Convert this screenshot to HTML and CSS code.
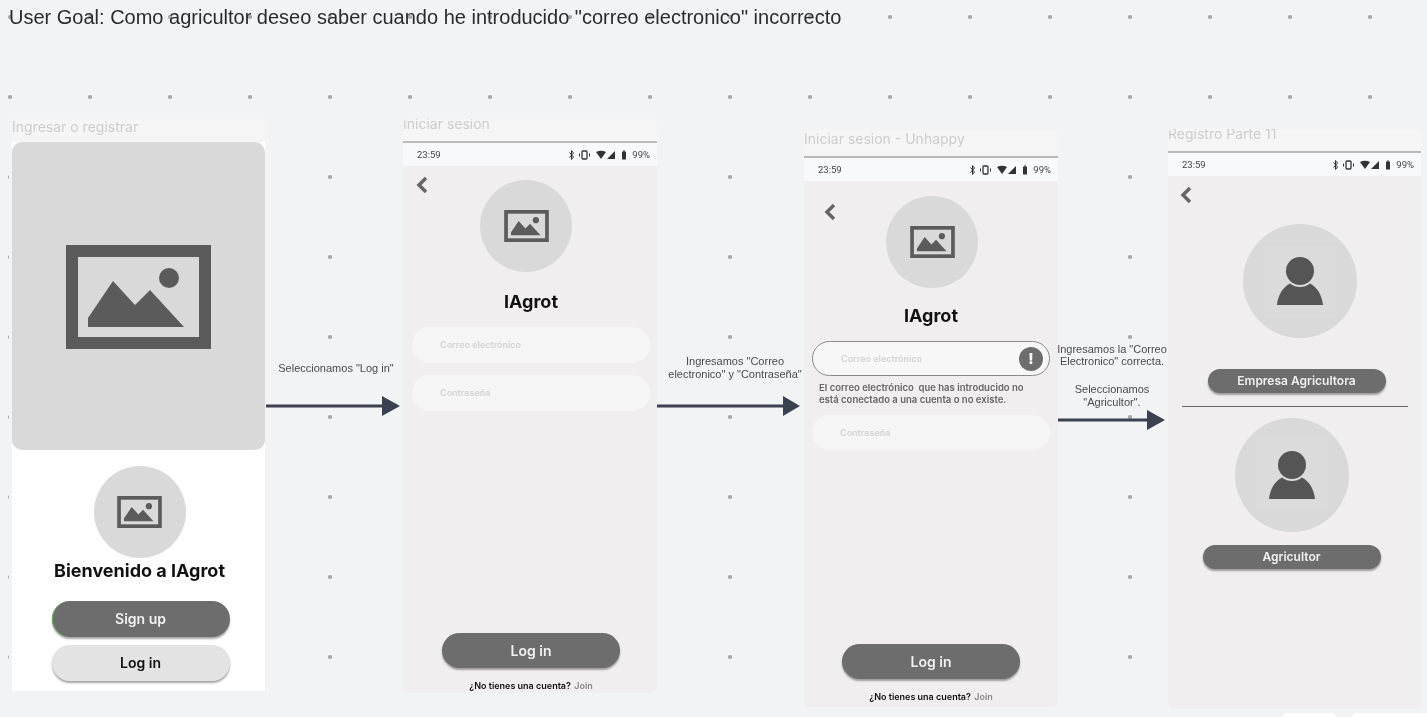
FILE: index.html
```html
<!DOCTYPE html>
<html lang="es">
<head>
    <meta charset="UTF-8">
    <title>User Goal</title>
    <link rel="stylesheet" href="styles.css">
</head>
<body>
    <svg class="defs" width="0" height="0">
        <symbol id="img-icon" viewBox="0 0 145 104">
            <rect x="6" y="6" width="133" height="92" fill="none" stroke="#5b5b5b" stroke-width="12"/>
            <circle cx="103" cy="33" r="10" fill="#5b5b5b"/>
            <path d="M22 82V73L47 36L69 60L84 45L118 82Z" fill="#5b5b5b"/>
        </symbol>
        <symbol id="person-icon" viewBox="0 0 46 48">
            <circle cx="23" cy="14" r="14" fill="#555"/>
            <path d="M0 48C1 38 6 30 13 26.500A16 16 0 0 0 33 26.500C40 30 45 38 46 48Z" fill="#555"/>
        </symbol>
        <symbol id="status-icons" viewBox="0 0 58 10">
            <path d="M0.500 2.500L4.500 7L2.500 9.500V0.500L4.500 3L0.500 7.500" fill="none" stroke="#333" stroke-width="1"/>
            <rect x="13" y="1" width="5" height="8" rx="1" fill="none" stroke="#333" stroke-width="1.300"/>
            <path d="M10.500 3.500V6.500M20.500 3.500V6.500" stroke="#333" stroke-width="1"/>
            <path d="M27 2Q32 -0.500 37 2L32 9Z" fill="#333"/>
            <path d="M46 1V9H38Z" fill="#333"/>
            <rect x="53" y="1.500" width="4" height="8" rx="0.500" fill="#333"/>
            <rect x="54" y="0.500" width="2" height="1" fill="#333"/>
        </symbol>
        <symbol id="chevron" viewBox="0 0 12 18">
            <path d="M10 2L3 9L10 16" fill="none" stroke="#666" stroke-width="3.500"/>
        </symbol>
    </svg>

    <div class="canvas">
        <h1 class="goal">User Goal: Como agricultor deseo saber cuando he introducido "correo electronico" incorrecto</h1>

        <!-- pantalla 1 -->
        <section class="frame frame-welcome">
            <div class="frame-title">Ingresar o registrar</div>
            <div class="welcome">
                <div class="hero">
                    <svg class="hero-icon"><use href="#img-icon"/></svg>
                </div>
                <div class="logo logo-welcome"><svg class="logo-icon"><use href="#img-icon"/></svg></div>
                <h2 class="app-name app-name-welcome">Bienvenido a IAgrot</h2>
                <div class="btn btn-signup">Sign up</div>
                <div class="btn btn-light">Log in</div>
            </div>
        </section>

        <!-- pantalla 2 -->
        <section class="frame frame-login">
            <div class="frame-title">Iniciar sesion</div>
            <div class="status">
                <span>23:59</span>
                <span class="status-right"><svg class="status-icons"><use href="#status-icons"/></svg>99%</span>
            </div>
            <div class="screen">
                <svg class="back"><use href="#chevron"/></svg>
                <div class="logo"><svg class="logo-icon"><use href="#img-icon"/></svg></div>
                <h2 class="app-name">IAgrot</h2>
                <div class="field field-first">Correo electrónico</div>
                <div class="field field-second">Contraseña</div>
                <div class="btn btn-main">Log in</div>
                <p class="join">¿No tienes una cuenta? <span>Join</span></p>
            </div>
        </section>

        <!-- pantalla 3 -->
        <section class="frame frame-unhappy">
            <div class="frame-title">Iniciar sesion - Unhappy</div>
            <div class="status">
                <span>23:59</span>
                <span class="status-right"><svg class="status-icons"><use href="#status-icons"/></svg>99%</span>
            </div>
            <div class="screen">
                <svg class="back"><use href="#chevron"/></svg>
                <div class="logo"><svg class="logo-icon"><use href="#img-icon"/></svg></div>
                <h2 class="app-name">IAgrot</h2>
                <div class="field field-first field-error">Correo electrónico<span class="alert">!</span></div>
                <p class="error-text">El correo electrónico&nbsp; que has introducido no<br>está conectado a una cuenta o no existe.</p>
                <div class="field field-second">Contraseña</div>
                <div class="btn btn-main">Log in</div>
                <p class="join">¿No tienes una cuenta? <span>Join</span></p>
            </div>
        </section>

        <!-- pantalla 4 -->
        <section class="frame frame-role">
            <div class="frame-title">Registro Parte 11</div>
            <div class="status">
                <span>23:59</span>
                <span class="status-right"><svg class="status-icons"><use href="#status-icons"/></svg>99%</span>
            </div>
            <div class="screen">
                <svg class="back"><use href="#chevron"/></svg>
                <div class="avatar avatar-one"><span class="avatar-box"><svg class="person"><use href="#person-icon"/></svg></span></div>
                <div class="btn btn-role btn-role-one">Empresa Agricultora</div>
                <div class="divider"></div>
                <div class="avatar avatar-two"><span class="avatar-box"><svg class="person"><use href="#person-icon"/></svg></span></div>
                <div class="btn btn-role btn-role-two">Agricultor</div>
            </div>
        </section>

        <p class="note note-1">Seleccionamos "Log in"</p>
        <p class="note note-2">Ingresamos "Correo<br>electronico" y "Contraseña"</p>
        <p class="note note-3">Ingresamos la "Correo<br>Electronico" correcta.</p>
        <p class="note note-4">Seleccionamos<br>"Agricultor".</p>

        <svg class="arrow arrow-1" viewBox="0 0 134 20"><path d="M0 8.500H116V11.500H0Z M116 0L134 10L116 20Z" fill="#3a4150"/></svg>
        <svg class="arrow arrow-2" viewBox="0 0 143 20"><path d="M0 8.500H126V11.500H0Z M126 0L143 10L126 20Z" fill="#3a4150"/></svg>
        <svg class="arrow arrow-3" viewBox="0 0 107 20"><path d="M0 8.500H89V11.500H0Z M89 0L107 10L89 20Z" fill="#3a4150"/></svg>

        <div class="chip chip-1"></div>
        <div class="chip chip-2"></div>
    </div>
</body>
</html>
```

FILE: styles.css
```css
* {
    box-sizing: border-box;
    margin: 0;
    padding: 0;
}

html, body {
    width: 1427px;
    height: 717px;
    overflow: hidden;
}

body {
    font-family: 'Inter', 'Liberation Sans', sans-serif;
    background: #f2f3f5;
}

.defs {
    position: absolute;
}

/* pizarra con puntos cada 80px */
.canvas {
    position: relative;
    width: 1427px;
    height: 717px;
    background-color: #f2f3f5;
    background-image: radial-gradient(circle at 40px 40px, #a9abb0 0, #a9abb0 1.7px, transparent 2.4px);
    background-size: 80px 80px;
    background-position: -30px -23px;
    filter: blur(0.35px);
}

.goal {
    position: absolute;
    left: 9px;
    top: 5px;
    font-family: 'Liberation Sans', Arial, sans-serif;
    font-size: 20px;
    line-height: 25px;
    font-weight: 400;
    color: #2a2b2d;
    white-space: nowrap;
}

.frame {
    position: absolute;
    display: flex;
    flex-direction: column;
    border-radius: 6px;
    overflow: hidden;
}

.frame-welcome { left: 9px; top: 118px; width: 256px; height: 573px; border-radius: 0; border-left: 3px solid #f2f3f5; }
.frame-login { left: 403px; top: 119px; width: 254px; height: 574px; }
.frame-unhappy { left: 804px; top: 130px; width: 254px; height: 577px; }
.frame-role { left: 1168px; top: 129px; width: 253px; height: 580px; }

.frame-title {
    flex: none;
    background: #f5f5f5;
    color: #cdcdcd;
    font-size: 14px;
    line-height: 18px;
    white-space: nowrap;
    border-bottom: 2px solid #b9b9b9;
}

.frame-welcome .frame-title { height: 24px; padding-top: 0; border-bottom: 0; }
.frame-login .frame-title { height: 24px; margin-top: 0; line-height: 10px; }
.frame-unhappy .frame-title { height: 28px; line-height: 18px; }
.frame-role .frame-title { height: 24px; line-height: 10px; }

.status {
    flex: none;
    height: 23px;
    display: flex;
    align-items: center;
    justify-content: space-between;
    padding: 0 7px 0 14px;
    background: #f8f9fb;
    font-family: 'Roboto', sans-serif;
    font-size: 9.500px;
    color: #444;
}

.status-right {
    display: flex;
    align-items: center;
    gap: 5px;
}

.status-icons {
    width: 58px;
    height: 10px;
}

.screen {
    flex: 1;
    display: flex;
    flex-direction: column;
    align-items: center;
    background: #f0eeef;
}

.frame-login .screen { padding: 14px 0 1px 2px; }
.frame-unhappy .screen { padding: 15px 0 4px; }
.frame-role .screen { padding-top: 48px; }

/* el chevron no ocupa alto en el flujo */
.back {
    width: 12px;
    height: 18px;
    margin-bottom: -18px;
    align-self: flex-start;
}

.frame-login .back { margin: -4px 0 -14px 11px; }
.frame-unhappy .back { margin: 7px 0 -25px 20px; }
.frame-role .back { margin: -38px 0 20px 12px; }

.logo {
    width: 92px;
    height: 92px;
    border-radius: 50%;
    background: #d9d9d9;
    display: flex;
    align-items: center;
    justify-content: center;
    flex: none;
}

.frame-login .logo { margin-right: 10px; }
.frame-unhappy .logo { margin-left: 2px; }

.logo-icon {
    width: 45px;
    height: 32px;
}

.app-name {
    font-size: 18px;
    line-height: 24px;
    font-weight: 700;
    color: #111;
    margin-top: 16px;
}

.frame-login .app-name { margin-top: 18px; }

.field {
    flex: none;
    width: 238px;
    height: 36px;
    border-radius: 18px;
    background: #f6f5f5;
    color: #d3d3d3;
    font-size: 9px;
    font-weight: 600;
    line-height: 34px;
    padding-left: 28px;
    display: flex;
    align-items: center;
    justify-content: space-between;
}

.field-first { margin-top: 13px; }
.field-second { margin-top: 12px; }

.frame-unhappy .field { height: 35px; }
.frame-unhappy .field-second { margin-top: 9px; }

.field-error {
    border: 1px solid #8a8a8a;
    background: #f8f7f7;
    padding-right: 6px;
}

.alert {
    width: 24px;
    height: 24px;
    border-radius: 50%;
    background: #6d6d6d;
    color: #fff;
    font-size: 15px;
    font-weight: 800;
    line-height: 24px;
    text-align: center;
}

.error-text {
    align-self: flex-start;
    margin: 6px 0 0 15px;
    font-size: 9.500px;
    line-height: 12px;
    font-weight: 600;
    color: #666;
    white-space: nowrap;
}

.btn {
    flex: none;
    width: 178px;
    height: 36px;
    border-radius: 18px;
    background: #6d6d6d;
    color: #f0f0f0;
    font-size: 14px;
    font-weight: 600;
    line-height: 36px;
    text-align: center;
    box-shadow: 0 2px 2px rgba(0, 0, 0, 0.35);
}

.btn-main {
    margin-top: auto;
    height: 35px;
    line-height: 35px;
}

.btn-role {
    width: 178px;
    height: 24px;
    line-height: 24px;
    font-size: 12px;
}

.btn-role-one { margin: 31px 0 0 4px; }
.btn-role-two { margin: 13px 0 0 -6px; }

.join {
    margin-top: 12px;
    font-size: 9px;
    line-height: 12px;
    font-weight: 600;
    color: #111;
    white-space: nowrap;
}

.join span {
    color: #8a8a8a;
    margin-left: 1px;
}

/* pantalla de bienvenida */
.welcome {
    flex: 1;
    display: flex;
    flex-direction: column;
    align-items: center;
    background: #fff;
    padding-bottom: 10px;
}

.hero {
    flex: none;
    width: 100%;
    height: 308px;
    border-radius: 10px;
    background: #d9d9d9;
    display: flex;
    align-items: center;
    justify-content: center;
}

.hero-icon {
    width: 145px;
    height: 104px;
    margin-top: 2px;
}

.logo-welcome {
    margin-top: 16px;
    margin-left: 2px;
}

.app-name-welcome {
    margin-top: 1px;
    margin-left: 2px;
}

.btn-signup {
    margin: 18px 0 0 4px;
    box-shadow: inset 1px 0 0 #6aa964, 0 2px 2px rgba(0, 0, 0, 0.35);
}

.btn-light {
    margin: 8px 0 0 4px;
    background: #e3e3e3;
    color: #111;
}

/* pantalla de rol */
.avatar {
    flex: none;
    width: 114px;
    height: 114px;
    border-radius: 50%;
    background: #d9d9d9;
    display: flex;
    align-items: center;
    justify-content: center;
}

.avatar-one { margin-left: 11px; }
.avatar-two { margin: 11px 6px 0 0; }

.avatar-box {
    width: 72px;
    height: 72px;
    background: #dbdbdb;
    display: flex;
    align-items: center;
    justify-content: center;
}

.person {
    width: 46px;
    height: 48px;
}

.divider {
    flex: none;
    width: 226px;
    height: 1px;
    margin-top: 13px;
    background: #666;
}

/* notas sobre la pizarra */
.note {
    position: absolute;
    font-family: 'Liberation Sans', Arial, sans-serif;
    font-size: 11px;
    line-height: 13px;
    color: #4b4b4b;
    text-align: center;
    white-space: nowrap;
    transform: translateX(-50%);
}

.note-1 { left: 336px; top: 362px; }
.note-2 { left: 735px; top: 355px; }
.note-3 { left: 1112px; top: 343px; line-height: 12px; }
.note-4 { left: 1112px; top: 383px; }

.arrow {
    position: absolute;
    height: 20px;
}

.arrow-1 { left: 266px; top: 396px; width: 134px; }
.arrow-2 { left: 657px; top: 396px; width: 143px; }
.arrow-3 { left: 1058px; top: 410px; width: 107px; }

.chip {
    position: absolute;
    top: 713px;
    height: 10px;
    background: #fff;
    border-radius: 8px;
}

.chip-1 { left: 1282px; width: 54px; }
.chip-2 { left: 1352px; width: 80px; }
```
